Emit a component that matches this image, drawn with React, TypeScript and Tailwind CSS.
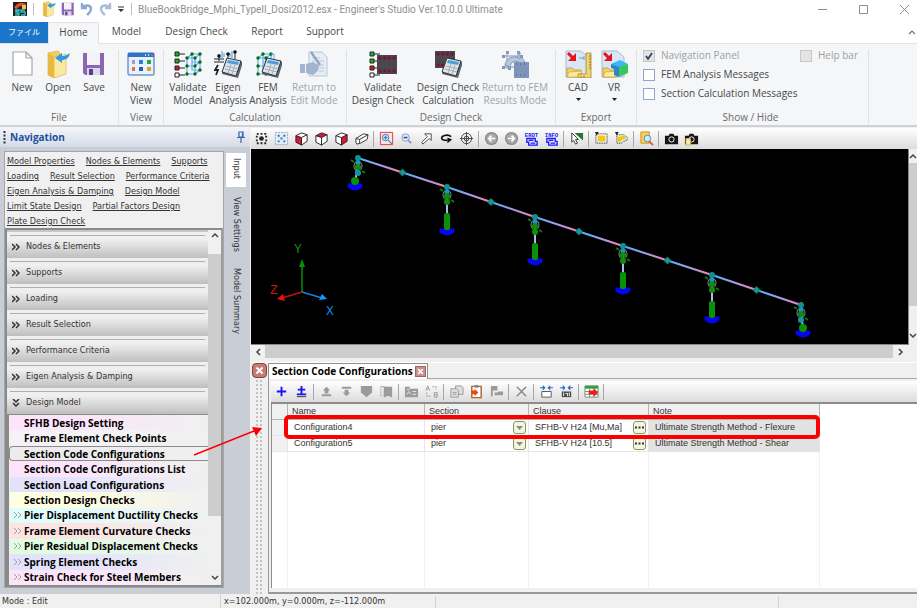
import type { ReactNode } from "react";
import clsx from "clsx";

type IconProps = { children: ReactNode; className?: string; box?: string };

function Icon({ children, className = "size-4", box = "0 0 16 16" }: IconProps) {
  return (
    <svg viewBox={box} className={clsx("shrink-0", className)} fill="none" aria-hidden="true">
      {children}
    </svg>
  );
}

/* ---------- shared icon parts ---------- */

function Folder() {
  return (
    <>
      <path d="M4 3 14 1l2 2v21l-6 4-6-3z" fill="#f3cf5e" stroke="#d9a93a" strokeWidth=".6" />
      <path d="M10 7 22 4v20l-12 4z" fill="#fbe9a0" stroke="#dcae43" strokeWidth=".6" />
      <path d="M10 7l-6-4v22l6 3z" fill="#e9b840" />
      <path d="M26 3c-1 5-4 7-8 7v3l-7-5 7-5v3c4 0 5-1 8-3z" fill="#2f9be8" />
    </>
  );
}

function Floppy() {
  return (
    <>
      <path d="M3 3h21v22H5l-2-2z" fill="#8a66b5" />
      <path d="M7 3h13v12H7z" fill="#f4f2f8" />
      <path d="M7 18h13v7H7z" fill="#ddd5ea" />
      <path d="M9 19h4v6H9z" fill="#5d3f8c" />
    </>
  );
}

function Calculator() {
  return (
    <>
      <path d="m12 9 17 3-5 16-16-4z" fill="#5b6570" />
      <path d="m13 8 14 3-5 15-14-4z" fill="#dde3e8" stroke="#333" />
      <path d="m14 10 11 2-1 3-11-2z" fill="#4d9ee0" />
      <path d="m12 16 12 3M11 19l12 3M17 14l-3 9M21 15l-3 9" stroke="#9aa5ae" strokeWidth=".8" />
    </>
  );
}

const frameNodes = [
  [2, 8],
  [10, 8],
  [2, 16],
  [10, 16],
  [2, 24],
  [10, 24],
  [7, 4],
  [15, 4],
  [15, 12],
  [15, 20],
];

function Frame({ x }: { x: number }) {
  return (
    <g transform={`translate(${x} 0)`}>
      <path
        d="M2 8h8v16H2zM2 16h8M7 4h8v16M2 8l5-4M10 8l5-4M10 16l5-4M10 24l5-4M7 4v16h8M7 12h8"
        stroke="#5ab0f0"
        strokeWidth="1.2"
      />
      {frameNodes.map(([cx, cy]) => (
        <circle key={`${cx}-${cy}`} cx={cx} cy={cy} r="1.7" fill="#0b6b12" />
      ))}
    </g>
  );
}

function CheckColumn() {
  return (
    <>
      <path d="M5 4h6M5 11h6M5 18h6M5 25h6" stroke="#222" />
      <path d="M1 2h4v4H1zM1 9h4v4H1z" fill="#19b51e" stroke="#222" />
      <path d="M1 16h4v4H1z" fill="#e01515" stroke="#222" />
      <path d="M1 23h4v4H1z" fill="#fff" stroke="#222" />
    </>
  );
}

function Rebar({ x, y, w, h }: { x: number; y: number; w: number; h: number }) {
  const step = (w - 6) / 3;
  return (
    <>
      <rect x={x} y={y} width={w} height={h} fill="#4a484b" />
      {[0, 1, 2, 3].map((i) => (
        <g key={i} fill="#7a1145">
          <circle cx={x + 3 + i * step} cy={y + 3} r="1.7" />
          <circle cx={x + 3 + i * step} cy={y + h - 3} r="1.7" />
        </g>
      ))}
    </>
  );
}

function ExportSheet() {
  return (
    <>
      <path d="M2 1h15l7 6v20H2z" fill="#d9e6f6" stroke="#a9bdd8" />
      <path d="m4 3 5 5" stroke="#e8121b" strokeWidth="3" />
      <path d="M12 3v8H4z" fill="#e8121b" />
      <path d="M3 18h5l2 2h7v7H3z" fill="#f4d264" stroke="#c89a2b" strokeWidth=".8" />
      <path d="m5 22 13-1-3 6H3z" fill="#fbe9a0" stroke="#c89a2b" strokeWidth=".6" />
    </>
  );
}

/* ---------- ribbon ---------- */

const ribbonIcons: Record<string, ReactNode> = {
  new: (
    <path d="M5 2h13l6 6v17H5zM18 2v6h6" fill="#fff" stroke="#a4a8ac" strokeWidth="1.2" strokeLinejoin="round" />
  ),
  open: <Folder />,
  save: <Floppy />,
  view: (
    <>
      <rect x="1" y="3" width="26" height="22" rx="1" fill="#e7f1fc" stroke="#2d66b6" />
      <path d="M1 3h26v4H1z" fill="#3272c4" />
      <path d="M18 5h1M21 5h1" stroke="#fff" strokeWidth="1.4" />
      <path d="M24 5h2" stroke="#ee6a44" strokeWidth="1.4" />
      <path d="M5 10h3v4H5z" fill="#a695d2" />
      <path d="M12 10h4v4h-4z" fill="#2b7fe0" />
      <path d="M20 10h4v4h-4z" fill="#27a53a" />
      <path d="M5 17h3v4H5z" fill="#ee6a44" />
      <path d="M12 17h4v4h-4z" fill="#2759c9" />
      <path d="M20 17h4v4h-4z" fill="#d8a52a" />
    </>
  ),
  validateModel: (
    <>
      <CheckColumn />
      <Frame x={11} />
    </>
  ),
  eigen: (
    <>
      <path d="M5 4v7M0 9h10M0 12h10M21 1v8M14 4v6" stroke="#222" />
      <path d="M8 1v7M10 3v4M18 1v7M16 3v4" stroke="#58a9ea" strokeWidth="1.2" />
      <circle cx="14" cy="4" r="1.8" fill="#111" />
      <circle cx="21" cy="2" r="1.8" fill="#111" />
      <circle cx="5" cy="6" r="1.8" fill="#111" />
      <path d="m4 15-3 5h3l-2 5" stroke="#222" strokeWidth="1.8" />
      <Calculator />
    </>
  ),
  fem: (
    <>
      <Frame x={2} />
      <path d="M17 4h3v7" stroke="#5ab0f0" />
      <Calculator />
    </>
  ),
  returnEdit: (
    <>
      <path d="M9 2h13l5 5v19H9z" fill="#e6edf6" stroke="#b9c7da" />
      <path d="M12 8h8M12 11h12M19 15h5M19 18h5M19 21h5" stroke="#b9c7da" />
      <path d="m11 2 9 13" stroke="#8fa3bf" strokeWidth="2.2" />
      <path d="M0 14h5v9H0zM6 14l7-2 6 3-1 6-5 4-7-2z" fill="#a3b5ce" />
    </>
  ),
  validateCheck: (
    <>
      <CheckColumn />
      <Rebar x={8} y={5} w={20} h={19} />
    </>
  ),
  checkCalc: (
    <>
      <Rebar x={1} y={1} w={20} h={17} />
      <Calculator />
    </>
  ),
  returnFem: (
    <>
      <path d="M3 6h17M6 2v17M3 17 20 3M17 2v10M3 17h11" stroke="#9fb2cd" strokeWidth="1.3" />
      <path d="M4 15C5 7 14 5 19 9V5l5 7-8 3 2-3c-5-2-8 0-9 5z" fill="#b7c6db" stroke="#8299bd" />
      <path d="M1 5h3v3H1zM5 1h3v3H5zM16 1h3v3h-3zM1 16h3v3H1zM19 5h3v3h-3zM7 17h3v3H7z" fill="#8299bd" />
      <path d="M13 12h15v16H13z" fill="#7d95bb" />
      <path d="M15 14h1M19 14h1M23 14h1M15 25h1M19 25h1M23 25h1" stroke="#5d77a3" strokeWidth="2" />
    </>
  ),
  cad: (
    <>
      <ExportSheet />
      <path d="M22 3h5v25H14v-4h8z" fill="#ecd377" stroke="#a98728" strokeWidth=".8" />
      <path d="M25 6h2M25 9h2M25 12h2M25 15h2M25 18h2M17 26v2M20 26v2" stroke="#7d6218" strokeWidth=".8" />
      <path d="M15 8h5m0-2v4" stroke="#7d93ad" />
    </>
  ),
  vr: (
    <>
      <ExportSheet />
      <path d="m20 10 8 4-8 4-9-4z" fill="#39b7f0" />
      <path d="m19 17 9-3v9l-9 4z" fill="#39c75d" />
      <path d="m11 14 8 3v10l-5-2v-6l-3-1z" fill="#2a86c9" />
    </>
  ),
};

type Command = { icon: string; lines: string[]; width: string; muted?: boolean; menu?: boolean };
type Group = { title: string; width: string; commands: Command[] };

const groups: Group[] = [
  {
    title: "File",
    width: "w-[119px]",
    commands: [
      { icon: "new", lines: ["New"], width: "w-9" },
      { icon: "open", lines: ["Open"], width: "w-9" },
      { icon: "save", lines: ["Save"], width: "w-9" },
    ],
  },
  {
    title: "View",
    width: "w-[45px]",
    commands: [{ icon: "view", lines: ["New", "View"], width: "w-9" }],
  },
  {
    title: "Calculation",
    width: "w-[183px]",
    commands: [
      { icon: "validateModel", lines: ["Validate", "Model"], width: "w-10" },
      { icon: "eigen", lines: ["Eigen", "Analysis"], width: "w-10" },
      { icon: "fem", lines: ["FEM", "Analysis"], width: "w-10" },
      { icon: "returnEdit", lines: ["Return to", "Edit Mode"], width: "w-[52px]", muted: true },
    ],
  },
  {
    title: "Design Check",
    width: "w-[209px]",
    commands: [
      { icon: "validateCheck", lines: ["Validate", "Design Check"], width: "w-16" },
      { icon: "checkCalc", lines: ["Design Check", "Calculation"], width: "w-[66px]" },
      { icon: "returnFem", lines: ["Return to FEM", "Results Mode"], width: "w-[68px]", muted: true },
    ],
  },
  {
    title: "Export",
    width: "w-[81px]",
    commands: [
      { icon: "cad", lines: ["CAD"], width: "w-9", menu: true },
      { icon: "vr", lines: ["VR"], width: "w-9", menu: true },
    ],
  },
];

function RibbonGroup({ title, width, commands }: Group) {
  return (
    <section className={clsx("flex shrink-0 flex-col justify-between border-r border-[#dfe2e5]", width)}>
      <div className="flex pl-1">
        {commands.map((command) => (
          <button
            key={command.icon}
            className={clsx(
              "flex flex-col items-center leading-[13px] whitespace-nowrap",
              command.width,
              command.muted ? "text-[#a3a5a8]" : "text-[#484848]",
            )}
          >
            <Icon box="0 0 28 28" className="mb-[3px] size-7">
              {ribbonIcons[command.icon]}
            </Icon>
            {command.lines.map((line) => (
              <span key={line}>{line}</span>
            ))}
            {command.menu && (
              <Icon box="0 0 5 3" className="mt-1 h-[3px] w-[5px]">
                <path d="M0 0h5L2.5 3z" fill="#222" />
              </Icon>
            )}
          </button>
        ))}
      </div>
      <h2 className="text-center leading-[14px] text-[#6b6b6b]">{title}</h2>
    </section>
  );
}

function Toggle({ label, checked = false, disabled = false }: { label: string; checked?: boolean; disabled?: boolean }) {
  return (
    <label className={clsx("flex items-center gap-1.5 leading-[19px]", disabled ? "text-[#a0a0a0]" : "text-[#484848]")}>
      <span className="relative flex">
        <input
          type="checkbox"
          defaultChecked={checked}
          disabled={disabled}
          className="peer size-3 appearance-none border border-[#8fa5cf] bg-white disabled:border-[#c6c6c6] disabled:bg-[#e4e4e4]"
        />
        <Icon box="0 0 12 12" className="pointer-events-none absolute inset-0 hidden size-3 peer-checked:block">
          <path d="m3 6 2 3 4-6" stroke="#33405f" strokeWidth="1.8" />
        </Icon>
      </span>
      {label}
    </label>
  );
}

function TitleBar() {
  return (
    <header className="flex h-[22px] shrink-0 items-center bg-white pr-2 pb-1 pl-3 text-[#8f8f8f]">
      <Icon>
        <path d="M1 1h14v14H1z" fill="#251c1a" />
        <path d="M2 7c3-6 8-6 12-4l-1 3c-3-2-6-1-8 2z" fill="#d8502b" />
        <path d="M3 9h4v1H4v2h3v2H3M13 9H9v2h4v3H9" stroke="#35c7c0" strokeWidth="1.4" />
        <path d="M10 4h4v4h-4z" fill="#e7c25a" />
      </Icon>
      <span className="mx-[5px] h-3 w-px bg-[#bdbdbd]" />
      <button aria-label="Open" className="mx-0.5">
        <Icon box="0 0 28 28">
          <Folder />
        </Icon>
      </button>
      <button aria-label="Save" className="mx-px">
        <Icon box="0 0 28 28">
          <Floppy />
        </Icon>
      </button>
      <button aria-label="Undo" className="mx-0.5">
        <Icon>
          <path d="M3 2v5h5M3 7c3-4 9-3 9 1 0 3-2 4-4 6" stroke="#8da8cd" strokeWidth="2.4" />
        </Icon>
      </button>
      <button aria-label="Redo">
        <Icon>
          <path d="M13 2v5H8M13 7C10 3 4 4 4 8c0 3 2 4 4 6" stroke="#a9bdd8" strokeWidth="2.4" />
        </Icon>
      </button>
      <button aria-label="Customize toolbar" className="ml-1">
        <Icon box="0 0 8 8" className="size-2">
          <path d="M1 2h6" stroke="#333" />
          <path d="M1 4h6L4 7z" fill="#333" />
        </Icon>
      </button>
      <span className="mx-1.5 h-3 w-px bg-[#bdbdbd]" />
      <h1 className="font-[Roboto,sans-serif] text-[10px] whitespace-nowrap">
        BlueBookBridge_Mphi_TypeII_Dosi2012.esx - Engineer's Studio Ver.10.0.0 Ultimate
      </h1>
      <div className="ml-auto flex items-center gap-8 text-[#8c8c8c]">
        <button aria-label="Minimize">
          <Icon box="0 0 9 9" className="size-[9px]">
            <path d="M0 4.5h9" stroke="currentColor" />
          </Icon>
        </button>
        <button aria-label="Maximize">
          <Icon box="0 0 9 9" className="size-[9px]">
            <path d="M.5.5h8v8h-8z" stroke="currentColor" />
          </Icon>
        </button>
        <button aria-label="Close">
          <Icon box="0 0 9 9" className="size-[9px]">
            <path d="m0 0 9 9M9 0 0 9" stroke="currentColor" />
          </Icon>
        </button>
      </div>
    </header>
  );
}

function Ribbon() {
  return (
    <div className="shrink-0 text-[10px]">
      <nav className="flex h-[21px] items-stretch bg-white text-[#484848] *:pb-0.5">
        <button className="w-12 bg-[#1b76c9] text-[8px] text-white">ファイル</button>
        <button className="relative z-10 -mb-px w-[51px] border-x border-t border-[#e0e3e6] bg-[#f4f6f8]">Home</button>
        <button className="w-[55px]">Model</button>
        <button className="w-[85px]">Design Check</button>
        <button className="w-14">Report</button>
        <button className="w-[60px]">Support</button>
        <button aria-label="Collapse ribbon" className="ml-auto pr-px">
          <Icon box="0 0 8 6" className="h-1.5 w-2">
            <path d="m1 5 3-3 3 3" stroke="#777" strokeWidth="1.2" />
          </Icon>
        </button>
      </nav>
      <div className="flex h-[84px] border-t border-b-2 border-t-[#e0e3e6] border-b-[#cfd1d3] bg-[#f4f6f8] pt-1.5 pb-px">
        {groups.map((group) => (
          <RibbonGroup key={group.title} {...group} />
        ))}
        <section className="flex w-[232px] shrink-0 flex-col justify-between border-r border-[#dfe2e5] pr-2.5 pl-1.5">
          <div className="-mt-1 flex items-start justify-between">
            <div>
              <Toggle label="Navigation Panel" checked disabled />
              <Toggle label="FEM Analysis Messages" />
              <Toggle label="Section Calculation Messages" />
            </div>
            <Toggle label="Help bar" disabled />
          </div>
          <h2 className="text-center leading-[14px] text-[#6b6b6b]">Show / Hide</h2>
        </section>
      </div>
    </div>
  );
}

/* ---------- navigation panel ---------- */

const linkRows = [
  ["Model Properties", "Nodes & Elements", "Supports"],
  ["Loading", "Result Selection", "Performance Criteria"],
  ["Eigen Analysis & Damping", "Design Model"],
  ["Limit State Design", "Partial Factors Design"],
  ["Plate Design Check"],
];

const sections = [
  "Nodes & Elements",
  "Supports",
  "Loading",
  "Result Selection",
  "Performance Criteria",
  "Eigen Analysis & Damping",
  "Design Model",
];

const designItems = [
  { label: "SFHB Design Setting", tint: "from-[#fde4fb]" },
  { label: "Frame Element Check Points", tint: "from-[#f4f2f6]" },
  { label: "Section Code Configurations", tint: "from-[#ececec]", selected: true },
  { label: "Section Code Configurations List", tint: "from-[#fde4fb]" },
  { label: "Section Load Configurations", tint: "from-[#e2e2fd]" },
  { label: "Section Design Checks", tint: "from-[#fefee0]" },
  { label: "Pier Displacement Ductility Checks", tint: "from-[#e0fdfd]", nested: true },
  { label: "Frame Element Curvature Checks", tint: "from-[#fde3e1]", nested: true },
  { label: "Pier Residual Displacement Checks", tint: "from-[#e1fde1]", nested: true },
  { label: "Spring Element Checks", tint: "from-[#e2e2fd]", nested: true },
  { label: "Strain Check for Steel Members", tint: "from-[#fde4fb]", nested: true },
];

const doubleRight = "m0 1 3 3-3 3M4 1l3 3-3 3";
const doubleDown = "m1 0 3 3 3-3M1 4l3 3 3-3";

function NavigationPanel() {
  return (
    <aside className="flex w-[250px] shrink-0 flex-col bg-[#c9ced6]">
      <div className="flex h-5 shrink-0 items-center bg-linear-to-b from-[#f4f6fa] to-[#d5dbe6] pr-1 pl-[3px]">
        <Icon box="0 0 3 13" className="h-[13px] w-[3px]">
          <path d="M1.5 0v13" stroke="#333" strokeWidth="2" strokeDasharray="2 1.5" />
        </Icon>
        <h2 className="ml-1 font-['Open_Sans',sans-serif] text-[10px] font-bold text-[#1d4f9e]">Navigation</h2>
        <button aria-label="Pin panel" className="ml-auto">
          <Icon box="0 0 10 12" className="h-3 w-2.5">
            <path d="M3 1h4v5H3zM1 6.5h8M5 7v5M6.500 1v5" stroke="#3563ad" strokeWidth="1.2" />
          </Icon>
        </button>
      </div>
      <div className="flex min-h-0 flex-1 pt-1 pb-1.5 pl-1">
        <div className="flex w-[221px] flex-col border border-[#a3a6ab] bg-[#f0f0f0]">
          <div className="h-[76px] shrink-0 pt-0.5 pl-0.5">
            {linkRows.map((row) => (
              <div key={row[0]} className="flex gap-[11px] leading-[15px] whitespace-nowrap">
                {row.map((label) => (
                  <a key={label} href="#" className="text-[#333] underline">
                    {label}
                  </a>
                ))}
              </div>
            ))}
          </div>
          <div className="flex min-h-0 flex-1 border-2 border-[#8a8a8a] border-r-[#9d9d9d]">
            <div className="flex min-w-0 flex-1 flex-col bg-[#eeeeee]">
              <div className="h-0.5 shrink-0 bg-[#c6c6c6]" />
              {sections.map((label) => (
                <button
                  key={label}
                  className="h-[26px] shrink-0 bg-linear-to-b from-[#efefef] from-30% to-[#bfbfbf] px-[3px] pt-[3px] text-left"
                >
                  <span className="flex h-full items-center gap-1.5 border-t border-[#b0b0b0] pb-px pl-0.5 text-[#333]">
                    <Icon box="0 0 8 8" className="size-2">
                      <path d={label === "Design Model" ? doubleDown : doubleRight} stroke="#333" strokeWidth="1.5" />
                    </Icon>
                    {label}
                  </span>
                </button>
              ))}
              <ul className="flex min-h-0 flex-1 flex-col border-t border-l-2 border-[#8a8a8a]">
                {designItems.map((item) => (
                  <li key={item.label} className="flex min-h-0 flex-1">
                    <button
                      className={clsx(
                        "flex w-full items-center gap-0.5 rounded-l-sm border border-r-0 bg-linear-to-r from-30% to-[#f0f0f0] pl-1 font-['Open_Sans',sans-serif] text-[10px] leading-3 font-bold whitespace-nowrap text-black",
                        item.tint,
                        item.selected ? "border-[#8c8c8c]" : "border-transparent",
                      )}
                    >
                      <Icon box="0 0 8 8" className="size-2">
                        {item.nested && <path d={doubleRight} stroke="#a0a0a0" />}
                      </Icon>
                      {item.label}
                    </button>
                  </li>
                ))}
              </ul>
            </div>
            <div className="flex w-[13px] shrink-0 flex-col items-center bg-[#f0f0f0]">
              <Icon box="0 0 8 6" className="mt-0.5 mb-4 h-1.5 w-2">
                <path d="m1 5 3-3 3 3" stroke="#444" strokeWidth="1.5" />
              </Icon>
              <div className="h-[262px] w-full bg-[#cdcdcd]" />
              <Icon box="0 0 8 6" className="mt-auto mb-1 h-1.5 w-2">
                <path d="m1 1 3 3 3-3" stroke="#444" strokeWidth="1.5" />
              </Icon>
            </div>
          </div>
        </div>
        <div className="flex flex-1 flex-col pt-0.5 pr-1 pl-0.5 text-[#333]">
          <button className="h-[34px] w-5 bg-white pb-1 [writing-mode:vertical-rl]">Input</button>
          <button className="h-[74px] w-5 [writing-mode:vertical-rl]">View Settings</button>
          <button className="h-20 w-5 [writing-mode:vertical-rl]">Model Summary</button>
        </div>
      </div>
    </aside>
  );
}

/* ---------- model view ---------- */

type Tool = { name: string; icon: ReactNode };

const cube = (face: string) => (
  <>
    <path d="m2 5 6-3 6 2v7l-6 4-6-3z" fill="#fff" />
    <path d={face} fill="#d9163a" />
    <path d="m2 5 6-3 6 2v7l-6 4-6-3zM2 5l6 2 6-3M8 7v8" stroke="#222" strokeLinejoin="round" />
  </>
);

const round = (d: string) => (
  <>
    <circle cx="8" cy="8" r="7" fill="#8b8b8b" />
    <circle cx="8" cy="8" r="5.5" fill="#a9a9a9" />
    <path d={d} stroke="#fff" strokeWidth="1.8" />
  </>
);

const badge = (word: string) => (
  <>
    <text x="8" y="6" textAnchor="middle" fontSize="6" fontWeight="700" fill="#1a1aff" fontFamily="Liberation Mono, monospace">
      {word}
    </text>
    <path d="M3 8h9v3h2v4H5v-3H3zM5 10h5M7 13h5" stroke="#1a1aff" strokeWidth="1.4" />
  </>
);

const camera = (
  <>
    <path d="M1 5h4l1-2h4l1 2h4v9H1z" fill="#161616" />
    <circle cx="8" cy="9" r="2.8" stroke="#fff" fill="#161616" />
  </>
);

const viewTools: Tool[][] = [
  [
    {
      name: "Select all",
      icon: (
        <>
          <rect x="3" y="3" width="10" height="10" stroke="#222" strokeWidth="2" strokeDasharray="2 2" />
          <circle cx="8" cy="8" r="2.5" fill="#222" />
        </>
      ),
    },
    {
      name: "Fit view",
      icon: (
        <>
          <rect x="1.5" y="1.5" width="13" height="13" fill="#e4eef8" stroke="#8aa8c8" strokeDasharray="2 1" />
          <path d="M4 4h2v2H4zM10 4h2v2h-2zM7 7h2v2H7zM4 10h2v2H4zM10 10h2v2h-2z" fill="#2f6fb5" />
        </>
      ),
    },
    { name: "Front view", icon: cube("m2 5 6 2v8l-6-3z") },
    { name: "Top view", icon: cube("m2 5 6-3 6 2-6 3z") },
    { name: "Side view", icon: cube("m8 7 6-3v7l-6 4z") },
    {
      name: "Perspective",
      icon: (
        <path d="m2 8 8-5 5 1-1 5-7 4-4 1-1-2zM2 8l4 1 9-5M6 9v4" fill="#fff" stroke="#333" strokeLinejoin="round" />
      ),
    },
  ],
  [
    {
      name: "Zoom window",
      icon: (
        <>
          <path d="M1.500 1.5h13v13h-13z" fill="#f7e4e4" stroke="#dd3b3b" />
          <circle cx="7" cy="7" r="3.5" fill="#cfe2f5" stroke="#4a7db5" />
          <path d="M7 5v4M5 7h4M10 10l4 4" stroke="#4a7db5" strokeWidth="1.3" />
        </>
      ),
    },
    {
      name: "Zoom out",
      icon: (
        <>
          <circle cx="7" cy="7" r="4" fill="#dfe8fb" stroke="#8695c0" />
          <path d="M5 7h4" stroke="#2a44c8" strokeWidth="1.6" />
          <path d="m10 10 3 3" stroke="#8695c0" strokeWidth="2" />
        </>
      ),
    },
    { name: "Pan", icon: <path d="M6 3h7v7l-2-2-7 6-1-2 6-6z" fill="#fff" stroke="#444" /> },
    {
      name: "Rotate",
      icon: (
        <>
          <path d="M13 6C9 3 2 5 3 8c0 2 3 2 6 2" stroke="#111" strokeWidth="1.8" />
          <path d="M9 7v6l5-4z" fill="#111" />
        </>
      ),
    },
    {
      name: "Center",
      icon: (
        <>
          <circle cx="8" cy="8" r="5.5" stroke="#444" />
          <circle cx="8" cy="8" r="2.5" stroke="#444" />
          <path d="M8 1v14M1 8h14" stroke="#444" />
        </>
      ),
    },
  ],
  [
    { name: "Previous view", icon: round("M12 8H5M8 5 5 8l3 3") },
    { name: "Next view", icon: round("M4 8h7M8 5l3 3-3 3") },
    { name: "Rotate mode", icon: badge("EROT") },
    { name: "Info", icon: badge("INFO") },
  ],
  [
    {
      name: "Pick",
      icon: (
        <>
          <path d="M6 2h9v8z" fill="#24762a" />
          <path d="m3 2 7 7H7l2 4-2 1-2-4-2 2z" fill="#fff" stroke="#333" />
        </>
      ),
    },
  ],
  [
    {
      name: "Rectangle select",
      icon: (
        <>
          <path d="M4 5h8v6H4z" fill="#f3c90a" />
          <path d="M2 3h12v10H2z" stroke="#222" strokeDasharray="1 1" />
          <path d="M1 1h4L3 5z" fill="#222" />
        </>
      ),
    },
    {
      name: "Polygon select",
      icon: (
        <>
          <path d="m4 6 7-1 2 3-4 1-3 3-2-1z" fill="#f3c90a" />
          <path d="M3 4h8l3 3v3l-4 1-2 2H3z" stroke="#222" strokeDasharray="1 1" />
          <path d="M1 1h4L3 5z" fill="#222" />
        </>
      ),
    },
  ],
  [
    {
      name: "Find",
      icon: (
        <>
          <path d="M2 1h9v12H2z" fill="#f8cf52" stroke="#c9912a" />
          <circle cx="9" cy="8" r="3.5" fill="#cfe8fa" stroke="#4f8dc4" />
          <path d="m11 11 4 4" stroke="#d2642a" strokeWidth="2" />
        </>
      ),
    },
  ],
  [
    { name: "Snapshot", icon: camera },
    {
      name: "Copy snapshot",
      icon: (
        <>
          {camera}
          <path d="M2 8h5v7H2z" fill="#f7e9a6" stroke="#c9a84a" strokeWidth=".8" />
        </>
      ),
    },
  ],
];

function Separator() {
  return <span className="mx-0.5 h-4 w-px bg-[#a6a6a6]" />;
}

function ToolStrip({ tools, endMark = false }: { tools: Tool[][]; endMark?: boolean }) {
  return (
    <div className="flex h-[21px] shrink-0 items-center bg-linear-to-b from-white to-[#dcdcdc]">
      {tools.map((set, index) => (
        <div key={set[0].name} className="flex items-center">
          {index > 0 && <Separator />}
          {set.map((tool) => (
            <button key={tool.name} aria-label={tool.name} className="flex w-5 justify-center">
              <Icon className="size-[15px]">{tool.icon}</Icon>
            </button>
          ))}
        </div>
      ))}
      {endMark && <Separator />}
    </div>
  );
}

const bearings = [
  [107, 9],
  [196, 38],
  [284, 68],
  [372, 97],
  [461, 126],
  [550, 156],
];

function Pier({ x, y, short, shift }: { x: number; y: number; short: boolean; shift: number }) {
  const foot = short ? 28 : 44;
  const fx = x + shift;
  return (
    <g>
      <path d={`M${x} ${y}L${fx} ${y + foot}`} stroke="#b9b4e8" strokeWidth="2" />
      <path
        d={`M${x - 7} ${y + 2}l3 2M${x + 4} ${y + 13}l3 2`}
        stroke="#0a7d0a"
        strokeWidth="2"
      />
      <ellipse cx={x} cy={y + 8} rx="4" ry="5" stroke="#8a8a8a" />
      <circle cx={x} cy={y} r="3" fill="#129090" />
      <circle cx={x} cy={y + 5} r="2.5" fill="#1f8fd0" />
      <circle cx={x} cy={y + 9} r="3" fill="#0a910a" />
      <circle cx={x} cy={y + 15} r="3" fill={short ? "#1591a8" : "#0a910a"} />
      <path d={`M${fx - 7} ${y + foot - 2}h14v3q-3 3-7 3t-7-3z`} fill="#0505f0" stroke="#0505f0" strokeLinejoin="round" />
      {short ? (
        <ellipse cx={fx} cy={y + 23} rx="4" ry="4" fill="#0a910a" />
      ) : (
        <rect x={x - 3} y={y + 26} width="6" height="17" rx="2" fill="#0a910a" />
      )}
    </g>
  );
}

function ModelView() {
  return (
    <svg viewBox="0 0 658 195" className="h-[195px] w-[658px]" fill="none" role="img" aria-label="Bridge model">
      <defs>
        <linearGradient id="girder">
          <stop offset="0" stopColor="#3fb4fa" />
          <stop offset=".5" stopColor="#a79be6" />
          <stop offset="1" stopColor="#fb7cb4" />
        </linearGradient>
      </defs>
      {bearings.slice(1).map(([x, y], i) => {
        const [px, py] = bearings[i];
        const mx = (px + x) / 2;
        const my = (py + y) / 2;
        return (
          <g key={x}>
            <path d={`M${px} ${py}L${mx} ${my}`} stroke="url(#girder)" strokeWidth="2" />
            <path d={`M${mx} ${my}L${x} ${y}`} stroke="url(#girder)" strokeWidth="2" />
            <path d={`M${mx} ${my - 4}l4 4-4 4-4-4z`} fill="#0c8a55" />
            <circle cx={mx} cy={my} r="2" fill="#1f8fc0" />
          </g>
        );
      })}
      {bearings.map(([x, y], i) => (
        <Pier key={x} x={x} y={y} short={i === 0 || i === 5} shift={i === 0 ? -3 : i === 5 ? 2 : 0} />
      ))}
      <path d="M51 143v-26" stroke="#0a910a" strokeWidth="1.5" />
      <path d="m51 110 3 8h-6z" fill="#0a910a" />
      <path d="m51 143 20 6" stroke="#0d86e8" strokeWidth="1.5" />
      <path d="m76 150-8 1 3-6z" fill="#0d9bff" />
      <path d="m51 143-20 6" stroke="#c01212" strokeWidth="1.5" />
      <path d="m26 150 8 2-2-7z" fill="#e81010" />
      <g fontFamily="Liberation Mono, monospace" fontSize="13" textAnchor="middle">
        <text x="47" y="104" fill="#0a910a">Y</text>
        <text x="23" y="145" fill="#d01212">Z</text>
        <text x="79" y="166" fill="#0d86e8">X</text>
      </g>
    </svg>
  );
}

/* ---------- configuration table ---------- */

const gray = "#9b9b9b";

const fitArrows = (
  <>
    <path d="M1 4h5M15 4h-5" stroke="#2b6dc4" strokeWidth="1.3" />
    <path d="m4 1 3 3-3 3zM12 1 9 4l3 3z" fill="#2b6dc4" />
  </>
);

const tableTools: Tool[][] = [
  [
    { name: "Add", icon: <path d="M8 3v10M3 8h10" stroke="#1616f0" strokeWidth="2" /> },
    {
      name: "Insert",
      icon: (
        <>
          <path d="M8 2v8M4 6h8M3 11h10" stroke="#1616f0" strokeWidth="2" />
          <path d="M3 13.5h10" stroke="#333" />
        </>
      ),
    },
  ],
  [
    { name: "Move up", icon: <path d="m8 3 4 4h-2v3H6V7H4zM3 11h10v2H3z" fill={gray} /> },
    { name: "Move down", icon: <path d="M3 3h10v2H3zM8 13l4-4h-2V6H6v3H4z" fill={gray} /> },
    { name: "Shield", icon: <path d="M2 2h12v7l-6 5-6-5z" fill={gray} /> },
    {
      name: "Range",
      icon: (
        <>
          <path d="M5 3h9v11h-2v-1H7v1H5z" fill={gray} />
          <path d="M2 2v12" stroke={gray} strokeDasharray="2 1" />
          <path d="M3 3h3" stroke={gray} />
        </>
      ),
    },
  ],
  [
    {
      name: "Edit sheet",
      icon: (
        <>
          <path d="M1 3h5v2h9v9H1z" fill={gray} />
          <path d="M3 6h3M3 11l2-3 2 3M9 8h4M9 11h4" stroke="#e8e8e8" />
        </>
      ),
    },
    {
      name: "Rename",
      icon: (
        <>
          <path d="m2 7 2-5 2 5M3 5.5h2M11 9v5h3V9zM11 11.5h3" stroke={gray} />
          <path d="M9 3h4v3M3 9v4h5" stroke={gray} strokeDasharray="2 1" />
        </>
      ),
    },
  ],
  [
    {
      name: "Copy",
      icon: (
        <>
          <path d="M7 2h6l2 2v7H7z" fill="#dedede" stroke={gray} />
          <path d="M2 5h6l2 2v7H2zM4 9h4M4 11h4" fill="#dedede" stroke={gray} />
        </>
      ),
    },
    {
      name: "Paste",
      icon: (
        <>
          <path d="M3 2.5h10v12H3z" fill="#fff" stroke="#a5652f" strokeWidth="1.5" />
          <path d="M6 1h4v3H6z" fill="#888" />
          <path d="M3 7h3V5l4 4-4 4v-2H3z" fill="#f0440f" />
        </>
      ),
    },
    { name: "Arrange", icon: <path d="M2 2h7v5H4v6H2zM6 9h3l1-1h5v4H6z" fill={gray} /> },
  ],
  [{ name: "Delete", icon: <path d="m3 3 10 10M13 3 3 13" stroke="#888" strokeWidth="1.5" /> }],
  [
    {
      name: "Fit column",
      icon: (
        <>
          <path d="M3 8h10v6H3z" fill="#fff" stroke="#555" />
          {fitArrows}
        </>
      ),
    },
    {
      name: "Fit numbers",
      icon: (
        <>
          <path d="M3 8h10v6H3z" fill="#444" />
          <path d="M5 9v4M7 10h2v3M11 9v4" stroke="#fff" />
          {fitArrows}
        </>
      ),
    },
  ],
  [
    {
      name: "Export table",
      icon: (
        <>
          <path d="M1 2h14v12H1z" fill="#fff" stroke="#7a8a7a" />
          <path d="M1 2h14v3H1z" fill="#27a53a" />
          <path d="M1 8h14M1 11h14M6 5v9" stroke="#7a8a7a" />
          <path d="M5 7h5V4l5 5-5 5v-3H5z" fill="#ee1c1c" />
        </>
      ),
    },
  ],
];

const columns = ["Name", "Section", "Clause", "Note"];

const rows = [
  { name: "Configuration4", section: "pier", clause: "SFHB-V H24 [Mu,Ma]", note: "Ultimate Strength Method - Flexure" },
  { name: "Configuration5", section: "pier", clause: "SFHB-V H24 [10.5]", note: "Ultimate Strength Method - Shear" },
];

const chip = "flex size-[13px] items-center justify-center rounded-[3px] border border-[#84995e] bg-[#f3f5e2]";

function CloseMark({ className }: { className?: string }) {
  return (
    <Icon box="0 0 9 9" className={className}>
      <path d="m1.5 1.5 6 6m0-6-6 6" stroke="#fff" strokeWidth="2" />
    </Icon>
  );
}

function ConfigTable() {
  return (
    <div className="relative min-h-0 flex-1 border-t-2 border-l border-[#8c8c8c] bg-white font-['Liberation_Sans',Arial,sans-serif]">
      <table className="h-full w-[548px] table-fixed border-separate border-spacing-0 text-left text-[#333]">
        <colgroup>
          <col className="w-4" />
          <col className="w-[137px]" />
          <col className="w-[104px]" />
          <col className="w-[120px]" />
          <col className="w-[171px]" />
        </colgroup>
        <thead>
          <tr className="h-4 bg-[#f0f0f0]">
            <th className="border-r border-b border-[#b4b4b4]" />
            {columns.map((column) => (
              <th key={column} className="border-r border-b border-[#b4b4b4] py-0 pl-1 font-normal">
                {column}
              </th>
            ))}
          </tr>
        </thead>
        <tbody>
          {rows.map((row) => (
            <tr key={row.name} className="h-4 *:border-r *:border-b *:border-[#e6e6e6] *:p-0">
              <td className="bg-[#f0f0f0]" />
              <td>
                <span className="pl-1.5">{row.name}</span>
              </td>
              <td>
                <div className="relative flex items-center justify-end pr-0.5">
                  <select aria-label={`Section of ${row.name}`} className="absolute inset-0 appearance-none pl-1.5">
                    <option>{row.section}</option>
                  </select>
                  <span className={clsx(chip, "pointer-events-none relative")}>
                    <Icon box="0 0 7 4" className="h-1 w-[7px]">
                      <path d="M0 0h7L3.5 4z" fill="#8b8f7c" />
                    </Icon>
                  </span>
                </div>
              </td>
              <td>
                <div className="flex items-center justify-between pr-0.5 pl-1.5">
                  {row.clause}
                  <button aria-label={`Edit clause of ${row.name}`} className={chip}>
                    <Icon box="0 0 9 3" className="h-[3px] w-[9px]">
                      <path d="M0 .5h2v2H0zM3.500.5h2v2h-2zM7 .5h2v2H7z" fill="#333" />
                    </Icon>
                  </button>
                </div>
              </td>
              <td className="bg-[#e2e2e2]">
                <span className="pl-1.5">{row.note}</span>
              </td>
            </tr>
          ))}
          <tr className="*:border-r *:border-[#f0f0f0]">
            <td />
            <td />
            <td />
            <td />
            <td />
          </tr>
        </tbody>
      </table>
      <div className="pointer-events-none absolute top-[11px] left-3 h-6 w-[536px] rounded-[5px] border-4 border-[#fb0000]" />
    </div>
  );
}

function Workspace() {
  return (
    <main className="flex min-w-0 flex-1 flex-col bg-[#f0f0f0] pt-px pl-px">
      <ToolStrip tools={viewTools} />
      <div className="flex h-[196px] shrink-0">
        <div className="min-w-0 flex-1 overflow-hidden border-r border-b border-[#888] bg-black">
          <ModelView />
        </div>
        <div className="flex w-2 flex-col items-center bg-[#f0f0f0]">
          <Icon box="0 0 8 6" className="my-1 h-1.5 w-2">
            <path d="m1 5 3-3 3 3" stroke="#444" strokeWidth="1.5" />
          </Icon>
          <div className="h-[143px] w-full bg-[#cdcdcd]" />
          <Icon box="0 0 8 6" className="mt-auto mb-1.5 h-1.5 w-2">
            <path d="m1 1 3 3 3-3" stroke="#444" strokeWidth="1.5" />
          </Icon>
        </div>
      </div>
      <div className="mr-2 flex h-[13px] shrink-0 items-center">
        <Icon box="0 0 6 8" className="mx-1 h-2 w-1.5">
          <path d="M5 1 2 4l3 3" stroke="#444" strokeWidth="1.5" />
        </Icon>
        <div className="h-full flex-1 bg-[#cdcdcd]" />
        <Icon box="0 0 6 8" className="mx-[5px] h-2 w-1.5">
          <path d="m1 1 3 3-3 3" stroke="#444" strokeWidth="1.5" />
        </Icon>
      </div>
      <div className="mt-1 flex min-h-0 flex-1 border-t border-white">
        <div className="flex w-[17px] shrink-0 flex-col items-start pl-px">
          <button aria-label="Close dock" className="rounded-sm border border-[#7e4643] bg-[#c87a74] p-0.5">
            <CloseMark className="size-[9px]" />
          </button>
          <Icon box="0 0 6 216" className="mt-0.5 ml-1 h-[216px] w-1.5">
            <path d="M1 0v216M5 0v216" stroke="#c4c4c4" strokeWidth="2" strokeDasharray="2 2" />
          </Icon>
        </div>
        <div className="flex min-w-0 flex-1 flex-col">
          <div className="flex h-4 shrink-0 items-end border-b border-[#a8a8a8]">
            <div className="relative -mb-px flex h-4 w-[160px] items-center justify-between border border-b-0 border-[#8f8f8f] bg-white pr-px pl-[3px]">
              <span className="font-['Open_Sans',sans-serif] text-[10px] font-bold whitespace-nowrap">
                Section Code Configurations
              </span>
              <button aria-label="Close tab" className="border border-[#a8625d] bg-[#c98f89] p-px">
                <CloseMark className="size-[7px]" />
              </button>
            </div>
          </div>
          <div className="flex min-h-0 flex-1 flex-col border-b-2 border-l border-[#999] pt-0.5 pb-1">
            <div className="flex min-h-0 flex-1 flex-col pl-0.5">
              <ToolStrip tools={tableTools} endMark />
              <ConfigTable />
            </div>
          </div>
        </div>
      </div>
    </main>
  );
}

export default function App() {
  return (
    <div className="flex h-screen flex-col overflow-hidden bg-[#f0f0f0] font-['Open_Sans','Noto_Sans_CJK_JP',sans-serif]">
      <TitleBar />
      <Ribbon />
      <div className="relative flex min-h-0 flex-1 font-['DejaVu_Sans_Condensed','DejaVu_Sans',sans-serif] text-[9px]">
        <NavigationPanel />
        <Workspace />
        <svg
          className="pointer-events-none absolute top-[298px] left-[190px] h-10 w-20"
          viewBox="0 0 80 40"
          fill="none"
          aria-hidden="true"
        >
          <path d="M4 30 64 6" stroke="#fb0000" strokeWidth="1.5" />
          <path d="m72 3-6 8-4-9z" fill="#fb0000" />
        </svg>
      </div>
      <footer className="flex h-[14px] shrink-0 items-center pt-0.5 font-['DejaVu_Sans_Condensed','DejaVu_Sans',sans-serif] text-[9px] whitespace-nowrap text-[#333]">
        <span className="w-[220px] pl-0.5">Mode : Edit</span>
        <span className="w-[215px] border-l border-[#d4d4d4] pl-[3px]">x=102.000m, y=0.000m, z=-112.000m</span>
        <span className="h-full w-[344px] border-x border-[#d4d4d4]" />
      </footer>
    </div>
  );
}
